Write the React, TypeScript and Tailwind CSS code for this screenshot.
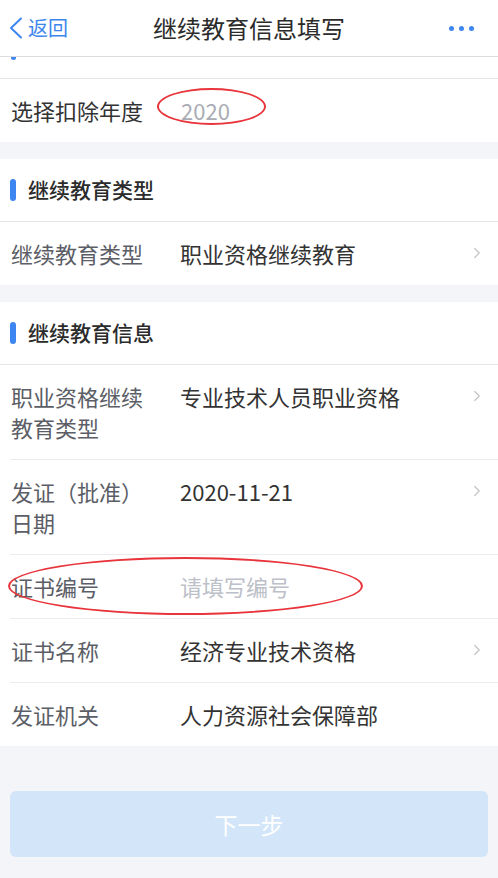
import { ChevronRight } from "lucide-react";

const font = { fontFamily: '"PingFang SC", "Noto Sans CJK SC", "Noto Sans", sans-serif' };

type Row = { label: string; value?: string; placeholder?: string; arrow?: boolean; ring?: boolean };

const INFO_ROWS: Row[] = [
  { label: "职业资格继续教育类型", value: "专业技术人员职业资格", arrow: true },
  { label: "发证（批准）日期", value: "2020-11-21", arrow: true },
  { label: "证书编号", placeholder: "请填写编号", ring: true },
  { label: "证书名称", value: "经济专业技术资格", arrow: true },
  { label: "发证机关", value: "人力资源社会保障部" },
];

function SectionHeader({ title }: { title: string }) {
  return (
    <div className="flex h-[63px] items-center border-b border-[#e6e6e8] pl-[10px]">
      <span className="h-[22px] w-[6px] rounded-full bg-[#3d85f0]" />
      <span className="ml-[12px] text-[21px] font-medium text-[#2b2b2b]">{title}</span>
    </div>
  );
}

function FormRow({ row, last }: { row: Row; last?: boolean }) {
  return (
    <div className={`relative ml-[10px] flex pr-[12px] ${last ? "" : "border-b border-[#ececee]"}`}>
      <div className="flex w-full py-[16px] leading-[31px]">
        <div className="w-[140px] shrink-0 pl-[1px] text-[22px] text-[#5b5e66]">{row.label}</div>
        <div className="ml-[30px] flex-1 text-[22px] text-[#333]">
          {row.value ?? <span className="text-[#bcc0c8]">{row.placeholder}</span>}
        </div>
        {row.arrow && <ChevronRight className="mt-[6px] h-[18px] w-[18px] text-[#c4c4c8]" strokeWidth={1.6} />}
      </div>
      {row.ring && (
        <div className="pointer-events-none absolute left-[-2px] top-[2px] h-[58px] w-[355px] rounded-[50%] border-2 border-[#e8343a]" />
      )}
    </div>
  );
}

export default function App() {
  return (
    <div style={font} className="h-[878px] w-[498px] overflow-hidden bg-[#f4f5f8]">
      <div className="relative flex h-[57px] items-center justify-center border-b border-[#dcdcdf] bg-white">
        <div className="absolute left-[9px] flex items-center gap-[5px] text-[20px] text-[#3d86ee]">
          <svg width="14" height="22" viewBox="0 0 14 22" fill="none" stroke="currentColor" strokeWidth="2" strokeLinecap="round" strokeLinejoin="round">
            <polyline points="12,1.5 2,11 12,20.5" />
          </svg>
          <span>返回</span>
        </div>
        <span className="text-[24px] text-[#2b2b2b]">继续教育信息填写</span>
        <div className="absolute right-[24px] flex gap-[5px]">
          <span className="h-[5px] w-[5px] rounded-full bg-[#3d86ee]" />
          <span className="h-[5px] w-[5px] rounded-full bg-[#3d86ee]" />
          <span className="h-[5px] w-[5px] rounded-full bg-[#3d86ee]" />
        </div>
      </div>

      <div className="bg-white">
        <div className="h-[22px] border-b border-[#e6e6e8] pl-[11px]">
          <span className="block h-[3px] w-[5px] rounded-b-full bg-[#3d85f0]" />
        </div>
        <div className="relative flex h-[63px] items-center pl-[11px]">
          <span className="w-[140px] text-[22px] text-[#333]">选择扣除年度</span>
          <span className="ml-[30px] text-[22px] text-[#a9acb4]">2020</span>
          <div className="pointer-events-none absolute left-[157px] top-[9px] h-[37px] w-[109px] rounded-[50%] border-2 border-[#e8343a]" />
        </div>
      </div>

      <div className="mt-[17px] bg-white">
        <SectionHeader title="继续教育类型" />
        <FormRow row={{ label: "继续教育类型", value: "职业资格继续教育", arrow: true }} last />
      </div>

      <div className="mt-[17px] bg-white">
        <SectionHeader title="继续教育信息" />
        {INFO_ROWS.map((r, i) => (
          <FormRow key={r.label} row={r} last={i === INFO_ROWS.length - 1} />
        ))}
      </div>

      <div className="px-[10px] pt-[45px]">
        <button type="button" className="flex h-[66px] w-full items-center justify-center rounded-[6px] bg-[#d3e6f9] text-[23px] text-white">
          下一步
        </button>
      </div>
    </div>
  );
}
